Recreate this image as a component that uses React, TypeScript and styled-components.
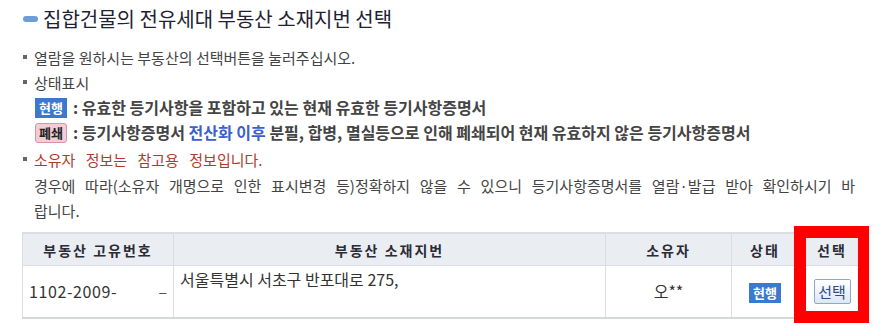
import React from "react";
import styled, { createGlobalStyle } from "styled-components";

const Global = createGlobalStyle`
  html, body { margin: 0; padding: 0; background: #fff; }
  body { font-family: "Noto Sans CJK KR", "Noto Sans", sans-serif; color: #444; }
`;

const Page = styled.div`
  position: relative;
  width: 883px;
  height: 330px;
  padding: 6px 0 0 22px;
  box-sizing: border-box;
  overflow: hidden;
`;

const Title = styled.h2`
  margin: 0;
  display: flex;
  align-items: center;
  gap: 5px;
  height: 26px;
  font-size: 20px;
  font-weight: 400;
  color: #1f2233;
  line-height: 26px;
`;

const TitleMark = styled.span`
  display: inline-block;
  width: 15px;
  height: 6px;
  border-radius: 3px;
  background: #6c9fd9;
  margin-left: 1px;
`;

const List = styled.ul`
  list-style: none;
  margin: 13px 0 0;
  padding: 0;
  font-size: 15px;
  line-height: 25px;
`;

const Item = styled.li<{ $red?: boolean; $noBullet?: boolean }>`
  position: relative;
  padding-left: 12px;
  color: ${(p) => (p.$red ? "#b23a2c" : "#444")};
  ${(p) => (p.$red ? "margin-top: 2px; word-spacing: 7px;" : "")}
  ${(p) => (p.$noBullet ? "margin-top: 1px;" : "")}
  &::before {
    content: "";
    display: ${(p) => (p.$noBullet ? "none" : "block")};
    position: absolute;
    left: 1px;
    top: 10px;
    width: 4px;
    height: 4px;
    background: #666;
  }
`;

const StatusRow = styled.div`
  display: flex;
  align-items: center;
  gap: 6px;
  height: 25px;
  padding-left: 1px;
  font-size: 16px;
  font-weight: 700;
  color: #444;
`;

const Badge = styled.span<{ $kind: "current" | "closed" }>`
  display: inline-flex;
  align-items: center;
  justify-content: center;
  width: 32px;
  height: 20px;
  box-sizing: border-box;
  font-size: 13px;
  font-weight: 700;
  line-height: 1;
  border-radius: ${(p) => (p.$kind === "closed" ? "3px" : "0")};
  background: ${(p) => (p.$kind === "closed" ? "#f4ccd6" : "#3a7acd")};
  border: ${(p) => (p.$kind === "closed" ? "1px solid #d993a5" : "none")};
  color: ${(p) => (p.$kind === "closed" ? "#222" : "#fff")};
`;

const Blue = styled.span`
  color: #3b5fcf;
`;

const Justified = styled.div`
  width: 821px;
  text-align: justify;
  text-align-last: justify;
  color: #444;
`;

const Plain = styled.div`
  color: #444;
`;

const Table = styled.table`
  margin-top: 9px;
  width: 844px;
  border-collapse: collapse;
  table-layout: fixed;
  font-size: 16px;
  border-top: 2px solid #dadde1;
  border-bottom: 2px solid #d4d7dc;
`;

const Th = styled.th<{ $w?: number }>`
  ${(p) => (p.$w ? `width: ${p.$w}px;` : "")}
  height: 31px;
  padding: 0;
  background: #eaeef3;
  border: 1px solid #dadde1;
  border-top: none;
  font-size: 14px;
  font-weight: 700;
  color: #2b2b36;
  text-align: center;
  letter-spacing: 2px;
`;

const Td = styled.td<{ $align?: string; $top?: boolean }>`
  height: 50px;
  padding: ${(p) => (p.$top ? "1px 6px 0" : "0 6px")};
  border: 1px solid #dadde1;
  border-bottom: none;
  text-align: ${(p) => p.$align || "center"};
  vertical-align: ${(p) => (p.$top ? "top" : "middle")};
  color: #333;
  line-height: 25px;
`;

const Number = styled.span`
  letter-spacing: 0.6px;
`;

const Residue = styled.span`
  float: right;
  color: #555;
`;

const SelectButton = styled.button`
  width: 37px;
  height: 25px;
  padding: 0;
  border: 1px solid #8ea7cf;
  border-radius: 2px;
  background: linear-gradient(#ffffff, #dce7f5);
  font-family: "Noto Sans CJK KR", sans-serif;
  font-size: 15px;
  color: #2d4b8c;
  cursor: pointer;
`;

const Highlight = styled.div`
  position: absolute;
  left: 794px;
  top: 226px;
  width: 75px;
  height: 97px;
  box-sizing: border-box;
  border: 12px solid #ff0000;
  border-right-width: 11px;
  pointer-events: none;
`;

export default function App() {
  return (
    <>
      <Global />
      <Page>
        <Title>
          <TitleMark />
          집합건물의 전유세대 부동산 소재지번 선택
        </Title>
        <List>
          <Item>열람을 원하시는 부동산의 선택버튼을 눌러주십시오.</Item>
          <Item>
            상태표시
            <StatusRow>
              <Badge $kind="current">현행</Badge>
              <span>: 유효한 등기사항을 포함하고 있는 현재 유효한 등기사항증명서</span>
            </StatusRow>
            <StatusRow>
              <Badge $kind="closed">폐쇄</Badge>
              <span>
                : 등기사항증명서 <Blue>전산화 이후</Blue> 분필, 합병, 멸실등으로 인해 폐쇄되어 현재 유효하지 않은 등기사항증명서
              </span>
            </StatusRow>
          </Item>
          <Item $red>소유자 정보는 참고용 정보입니다.</Item>
          <Item $noBullet>
            <Justified>
              경우에 따라(소유자 개명으로 인한 표시변경 등)정확하지 않을 수 있으니 등기사항증명서를 열람·발급 받아 확인하시기 바
            </Justified>
            <Plain>랍니다.</Plain>
          </Item>
        </List>
        <Table>
          <thead>
            <tr>
              <Th $w={150}>부동산 고유번호</Th>
              <Th $w={431}>부동산 소재지번</Th>
              <Th $w={125}>소유자</Th>
              <Th $w={66}>상태</Th>
              <Th>선택</Th>
            </tr>
          </thead>
          <tbody>
            <tr>
              <Td $align="left">
                <Number>1102-2009-</Number>
                <Residue>–</Residue>
              </Td>
              <Td $align="left" $top>
                서울특별시 서초구 반포대로 275,
              </Td>
              <Td>오**</Td>
              <Td>
                <Badge $kind="current">현행</Badge>
              </Td>
              <Td>
                <SelectButton>선택</SelectButton>
              </Td>
            </tr>
          </tbody>
        </Table>
        <Highlight />
      </Page>
    </>
  );
}
